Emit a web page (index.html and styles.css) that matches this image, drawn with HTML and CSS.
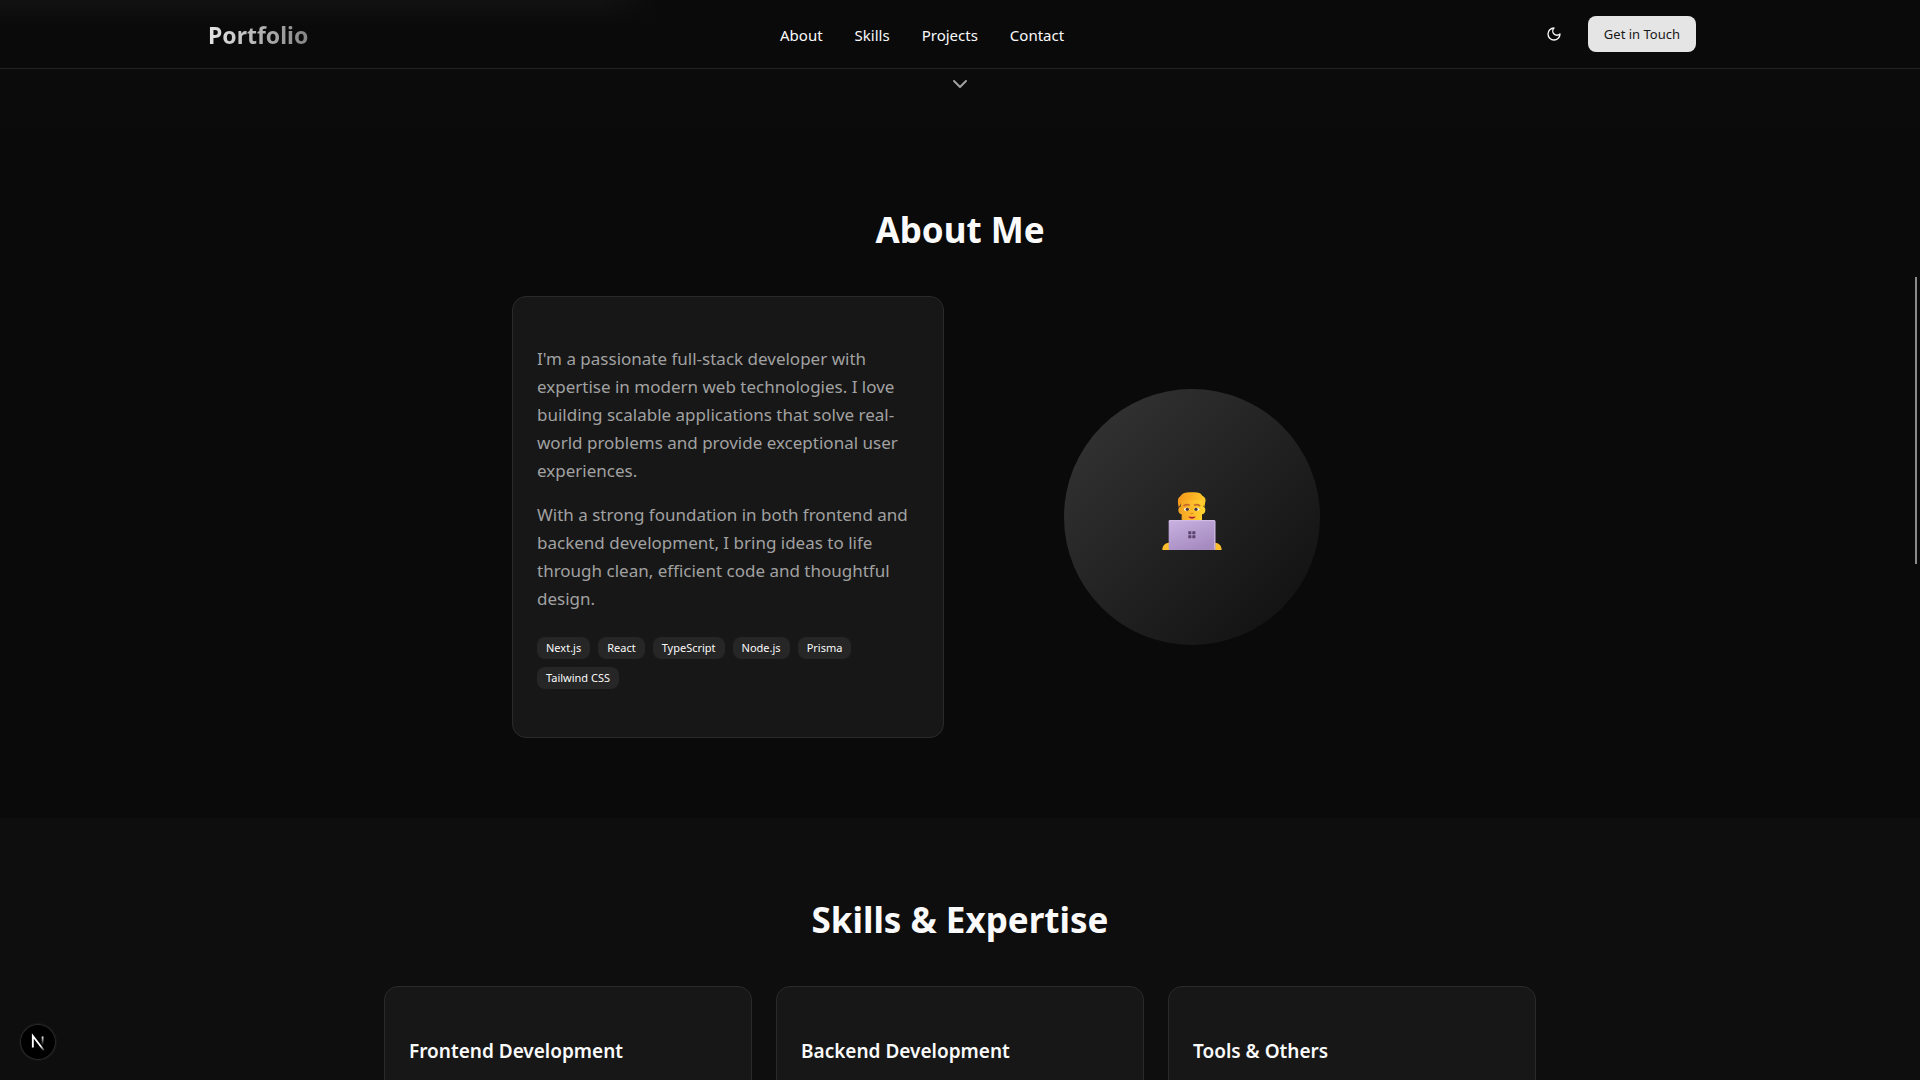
FILE: index.html
```html
<!DOCTYPE html>
<html lang="en">
<head>
  <meta charset="utf-8">
  <meta name="viewport" content="width=device-width, initial-scale=1">
  <title>Portfolio</title>
  <link rel="stylesheet" href="styles.css">
</head>
<body>
  <header class="site-header">
    <div class="header-inner">
      <a class="logo" href="#top">Portfolio</a>
      <nav class="main-nav" aria-label="Main">
        <a href="#about">About</a>
        <a href="#skills">Skills</a>
        <a href="#projects">Projects</a>
        <a href="#contact">Contact</a>
      </nav>
      <div class="header-actions">
        <button class="icon-button" type="button" aria-label="Toggle theme">
          <svg width="16" height="16" viewBox="0 0 24 24" fill="none" stroke="currentColor" stroke-width="2" stroke-linecap="round" stroke-linejoin="round" aria-hidden="true"><path d="M12 3a6 6 0 0 0 9 9 9 9 0 1 1-9-9Z"/></svg>
        </button>
        <button class="cta" type="button">Get in Touch</button>
      </div>
    </div>
  </header>

  <main>
    <section class="hero-end" id="top">
      <svg class="chevron" width="24" height="24" viewBox="0 0 24 24" fill="none" stroke="currentColor" stroke-width="2" stroke-linecap="round" stroke-linejoin="round" aria-hidden="true"><path d="m6 9 6 6 6-6"/></svg>
    </section>

    <section class="section" id="about">
      <h2>About Me</h2>
      <div class="about-grid">
        <article class="card about-card">
          <div class="about-text">
            <p>I'm a passionate full-stack developer with expertise in modern web technologies. I love building scalable applications that solve real-world problems and provide exceptional user experiences.</p>
            <p>With a strong foundation in both frontend and backend development, I bring ideas to life through clean, efficient code and thoughtful design.</p>
          </div>
          <ul class="badges">
            <li>Next.js</li>
            <li>React</li>
            <li>TypeScript</li>
            <li>Node.js</li>
            <li>Prisma</li>
            <li>Tailwind CSS</li>
          </ul>
        </article>
        <div class="avatar">
          <svg width="60" height="58" viewBox="0 0 180 174" role="img" aria-label="Technologist">
            <defs>
              <linearGradient id="face" x1="0" y1="0" x2="1" y2="0"><stop offset="0" stop-color="#f0a024"/><stop offset=".45" stop-color="#fdb92b"/><stop offset="1" stop-color="#ffd62e"/></linearGradient>
              <linearGradient id="hair" x1="0" y1="0" x2="1" y2="0"><stop offset="0" stop-color="#f59a1c"/><stop offset=".5" stop-color="#fcae22"/><stop offset="1" stop-color="#ffcb2d"/></linearGradient>
              <linearGradient id="lid" x1="0" y1="0" x2=".6" y2="1"><stop offset="0" stop-color="#c9b2e2"/><stop offset="1" stop-color="#a68bc0"/></linearGradient>
            </defs>
            <path d="M1 174c0-13 9-22 20-22h10v22zM179 174c0-13-9-22-20-22h-10v22z" fill="#fdbd2c"/>
            <path d="M56 20v24c-5 0-7 4-7 10 0 7 4 13 10 13v19h61V67c6 0 10-6 10-13 0-6-2-10-7-10V20z" fill="url(#face)"/>
            <path d="M50 46c-3-16-4-28 5-33C62 2 74 0 90 1c16-1 26 1 31 10 9 4 11 11 9 19l-3 16c-5-3-4-15-7-22-10 3-18-1-29-1-12 2-21 0-30 3-5 5-5 14-11 20z" fill="url(#hair)"/>
            <path d="M66 41q8-5 15-2M98 39q8-3 15 2" fill="none" stroke="#c9672a" stroke-width="5" stroke-linecap="round"/>
            <ellipse cx="74" cy="52" rx="8" ry="5" fill="#fff"/><ellipse cx="104" cy="52" rx="8" ry="5" fill="#fff"/>
            <circle cx="76" cy="52" r="5" fill="#493237"/><circle cx="102" cy="52" r="5" fill="#493237"/>
            <path d="M85 64q4 3 9 0" fill="none" stroke="#e57a20" stroke-width="3"/>
            <path d="M79 73q11 3 22 0c-3 10-19 10-22 0z" fill="#b8233c"/>
            <rect x="20" y="84" width="140" height="90" rx="4" fill="url(#lid)"/>
            <path d="M22 86h136" stroke="#d3bfe6" stroke-width="3"/>
            <path d="M158 88v84" stroke="#c9b2da" stroke-width="4"/>
            <path d="M79 118h9v9h-9zM91 118h9v9h-9zM79 130h9v9h-9zM91 130h9v9h-9z" fill="#5b416d"/>
          </svg>
        </div>
      </div>
    </section>

    <section class="section section-muted" id="skills">
      <h2>Skills &amp; Expertise</h2>
      <div class="skills-grid">
        <article class="card skill-card"><h3>Frontend Development</h3></article>
        <article class="card skill-card"><h3>Backend Development</h3></article>
        <article class="card skill-card"><h3>Tools &amp; Others</h3></article>
      </div>
    </section>
  </main>

  <button class="dev-badge" type="button" aria-label="Open developer tools">
    <svg width="36" height="36" viewBox="0 0 36 36" fill="none" aria-hidden="true">
      <defs>
        <linearGradient id="diag" gradientUnits="userSpaceOnUse" x1="10" y1="11" x2="15" y2="18"><stop stop-color="#fff"/><stop offset=".8" stop-color="#fff" stop-opacity="0"/></linearGradient>
        <linearGradient id="stem" gradientUnits="userSpaceOnUse" x1="12" y1="1" x2="12" y2="10"><stop stop-color="#fff"/><stop offset="1" stop-color="#fff" stop-opacity="0"/></linearGradient>
      </defs>
      <g transform="translate(10.5 11)">
        <path d="M13.3 15.2 2.34 1v11.6" stroke="url(#diag)" stroke-width="1.86"/>
        <path d="M11.2 1.5h1.8v10h-1.8z" fill="url(#stem)"/>
      </g>
    </svg>
  </button>
  <div class="scroll-thumb" aria-hidden="true"></div>
</body>
</html>
```
FILE: styles.css
```css
* {
  box-sizing: border-box;
}

body {
  margin: 0;
  height: 100vh;
  overflow: hidden;
  background: #0a0a0a;
  color: #fafafa;
  font-family: "Noto Sans", "Open Sans", sans-serif;
  font-size: 15px;
  line-height: 24px;
}

h2,
h3,
p,
ul {
  margin: 0;
  padding: 0;
}

button {
  border: 0;
  padding: 0;
  font: inherit;
  cursor: pointer;
}

a {
  color: inherit;
  text-decoration: none;
}

.site-header {
  position: sticky;
  top: 0;
  z-index: 10;
  border-bottom: 1px solid #222;
  background:
    linear-gradient(to right, transparent 600px, #0a0a0a 660px),
    linear-gradient(to bottom, #121212, #0a0a0a 26px);
}

.header-inner {
  display: flex;
  align-items: center;
  justify-content: space-between;
  max-width: 1536px;
  margin: 0 auto;
  padding: 16px 32px 16px 16px;
}

.logo {
  padding-top: 2px;
  font-size: 23px;
  font-weight: 700;
  background: linear-gradient(to right, #e5e5e5, #858585);
  -webkit-background-clip: text;
  background-clip: text;
  color: transparent;
}

.main-nav {
  display: flex;
  gap: 32px;
  padding-top: 2px;
}

.header-actions {
  display: flex;
  align-items: center;
  gap: 16px;
}

.icon-button {
  display: grid;
  place-items: center;
  width: 36px;
  height: 36px;
  background: transparent;
  color: #fafafa;
}

.cta {
  height: 36px;
  padding: 0 16px;
  border-radius: 8px;
  background: #e5e5e5;
  color: #171717;
  font-size: 13px;
}

.hero-end {
  display: flex;
  justify-content: center;
  height: 59px;
  padding-top: 3px;
  background: #0b0b0b;
  color: #a1a1a1;
}

.section {
  padding: 80px 16px;
}

.section-muted {
  background: #0e0e0e;
}

.section h2 {
  margin-bottom: 44px;
  font-size: 35px;
  font-weight: 700;
  line-height: 44px;
  text-align: center;
}

.about-grid {
  display: grid;
  grid-template-columns: 1fr 1fr;
  align-items: center;
  gap: 32px;
  max-width: 896px;
  margin: 0 auto;
}

.card {
  padding: 48px 24px;
  border: 1px solid #2a2a2a;
  border-radius: 14px;
  background: #171717;
}

.about-text {
  display: grid;
  gap: 16px;
  margin-bottom: 24px;
  color: #a1a1a1;
  font-size: 17px;
  line-height: 28px;
}

.badges {
  display: flex;
  flex-wrap: wrap;
  gap: 8px;
  list-style: none;
}

.badges li {
  padding: 3px 9px;
  border-radius: 8px;
  background: #262626;
  font-size: 11px;
  line-height: 16px;
}

.avatar {
  display: grid;
  place-items: center;
  justify-self: center;
  width: 256px;
  height: 256px;
  padding-top: 8px;
  border-radius: 50%;
  background: linear-gradient(135deg, #363636, #0e0e0e);
}

.skills-grid {
  display: grid;
  grid-template-columns: repeat(3, 1fr);
  gap: 24px;
  max-width: 1152px;
  margin: 0 auto;
}

.skill-card h3 {
  font-size: 19px;
  font-weight: 600;
  line-height: 32px;
}

.dev-badge {
  position: fixed;
  left: 20px;
  bottom: 20px;
  width: 36px;
  height: 36px;
  border-radius: 50%;
  background: #000;
  box-shadow: inset 0 0 0 1px #2b2b2b, 0 0 0 1px #171717;
}

.dev-badge svg {
  display: block;
}

.scroll-thumb {
  position: fixed;
  top: 277px;
  right: 3px;
  width: 2px;
  height: 287px;
  background: #8b8b8b;
}
```
